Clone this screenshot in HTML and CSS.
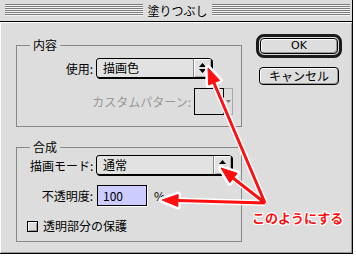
FILE: index.html
```html
<!DOCTYPE html>
<html lang="ja">
<head>
    <meta charset="UTF-8">
    <title>塗りつぶし</title>
    <link rel="stylesheet" href="styles.css">
</head>
<body>

<div class="window">
    <div class="titlebar">
        <span class="stripes"></span>
        <span class="title">塗りつぶし</span>
        <span class="stripes"></span>
    </div>

    <div class="dialog">
        <div class="main">
            <fieldset class="group first">
                <legend>内容</legend>
                <div class="row">
                    <span class="lbl">使用:</span>
                    <div class="popup short">
                        <span class="val">描画色</span>
                        <span class="arr"><svg width="7" height="10" viewBox="0 0 7 10"><path d="M3.5 0 L7 4 L0 4 Z M0 6 L7 6 L3.5 10 Z"/></svg></span>
                    </div>
                </div>
                <div class="row pattern">
                    <span class="lbl dim">カスタムパターン:</span>
                    <div class="swatch">
                        <span class="well"></span>
                        <span class="drop"><svg width="5" height="3" viewBox="0 0 5 3"><path d="M0 0 L5 0 L2.5 3 Z"/></svg></span>
                    </div>
                </div>
            </fieldset>

            <fieldset class="group second">
                <legend>合成</legend>
                <div class="row">
                    <span class="lbl">描画モード:</span>
                    <div class="popup long">
                        <span class="val">通常</span>
                        <span class="arr"><svg width="7" height="10" viewBox="0 0 7 10"><path d="M3.5 0 L7 4 L0 4 Z M0 6 L7 6 L3.5 10 Z"/></svg></span>
                    </div>
                </div>
                <div class="row gap">
                    <span class="lbl">不透明度:</span>
                    <span class="num">100</span>
                    <span class="pct">%</span>
                </div>
                <div class="row check-row">
                    <span class="check"></span>
                    <span>透明部分の保護</span>
                </div>
            </fieldset>
        </div>

        <div class="buttons">
            <div class="default-ring"><div class="btn ok">OK</div></div>
            <div class="btn cancel">キャンセル</div>
        </div>
    </div>

    <!-- 注釈の矢印 -->
    <svg class="marks" width="356" height="257" viewBox="0 0 356 257">
        <g class="halo">
            <path d="M265 203 L214 83 M265 203 L233 178 M265 203 L178 200.5"/>
            <polygon points="208,68 219.7,80.4 208.7,85"/>
            <polygon points="221,168 237.2,173.3 229.8,182.7"/>
            <polygon points="162,200 178.2,194.5 177.8,206.5"/>
        </g>
        <g class="ink">
            <path d="M265 203 L214 83 M265 203 L233 178 M265 203 L178 200.5"/>
            <polygon points="208,68 219.7,80.4 208.7,85"/>
            <polygon points="221,168 237.2,173.3 229.8,182.7"/>
            <polygon points="162,200 178.2,194.5 177.8,206.5"/>
        </g>
    </svg>
    <div class="note">このようにする</div>
</div>

</body>
</html>
```

FILE: styles.css
```css
body {
    margin: 0;
    background-color: #ffffff;
    font-family: "Noto Sans CJK JP", "DejaVu Sans", sans-serif;
    font-size: 12px;
    color: #000;
}

.window {
    position: relative;
    width: 352px;
    height: 253px;
    background-color: #dddddd;
    border-right: 1px solid #000;
    border-bottom: 1px solid #000;
}

.titlebar {
    display: flex;
    gap: 2px;
    height: 21px;
    padding: 0 2px 0 5px;
    border-bottom: 1px solid #000;
}

.stripes {
    flex: 1;
    height: 12px;
    margin-top: 4px;
    background: repeating-linear-gradient(to bottom, #7c7c7c 0 1px, #f4f4f4 1px 2px);
}

.title {
    padding: 0 2px;
    line-height: 21px;
}

.dialog {
    display: flex;
    height: 231px;
    box-sizing: border-box;
    padding: 12px 0 0 16px;
    box-shadow: inset 1px 1px 0 #fff, inset -1px -1px 0 #999;
}

.main {
    width: 226px;
}

.group {
    margin: 0;
    padding: 6px 8px 11px 13px;
    border: 1px solid #888;
}

.group legend {
    padding: 0 3px;
    line-height: 14px;
}

.group.first {
    margin-top: 4px;
}

.group.second {
    margin-top: 13px;
    padding-top: 1px;
    padding-bottom: 8px;
}

.row {
    display: flex;
    align-items: center;
}

.lbl {
    width: 63px;
    margin-right: 3px;
    text-align: right;
    white-space: nowrap;
}

.dim {
    color: #999;
}

.row.pattern {
    justify-content: flex-end;
    margin-top: 10px;
}

.row.pattern .lbl {
    width: auto;
}

.row.gap {
    margin-top: 10px;
}

.popup {
    display: flex;
    height: 20px;
    box-sizing: border-box;
    border: 1px solid #000;
    border-radius: 3px;
    box-shadow: 1px 1px 0 #000;
    background-color: #e2e2e2;
}

.popup.short {
    width: 116px;
}

.popup.long {
    width: 136px;
}

.popup .val {
    flex: 1;
    padding-left: 6px;
    line-height: 18px;
}

.popup .arr {
    display: flex;
    align-items: center;
    justify-content: center;
    width: 17px;
    border-left: 1px solid #888;
    border-radius: 0 2px 2px 0;
    box-shadow: inset 1px 1px 0 #fff, inset -1px -1px 0 #aaa;
}

.swatch {
    display: flex;
}

.swatch .well {
    width: 28px;
    height: 25px;
    border: 1px solid #000;
    background-color: #dddddd;
}

.swatch .drop {
    display: flex;
    justify-content: center;
    padding-top: 11px;
    width: 9px;
    border: 1px solid #aaa;
    border-left: none;
    box-sizing: border-box;
    height: 27px;
    fill: #777;
}

.num {
    width: 50px;
    height: 21px;
    box-sizing: border-box;
    margin-left: 1px;
    padding-left: 5px;
    border: 1px solid #000;
    background-color: #ccccff;
    box-shadow: 1px 1px 0 #fff;
    line-height: 19px;
}

.pct {
    margin-left: 7px;
    font-size: 12px;
}

.check-row {
    margin-top: 13px;
    line-height: 14px;
}

.check {
    width: 11px;
    height: 11px;
    box-sizing: border-box;
    margin-left: -3px;
    margin-right: 5px;
    border: 1px solid #000;
    background-color: #dddddd;
    box-shadow: inset 1px 1px 0 #fff, inset -1px -1px 0 #999;
}

.buttons {
    display: flex;
    flex-direction: column;
    align-items: center;
    gap: 9px;
    width: 86px;
    margin-left: 14px;
}

.default-ring {
    width: 86px;
    height: 24px;
    box-sizing: border-box;
    padding: 1px;
    border: 3px solid #1a1a1a;
    border-radius: 8px;
}

.btn {
    box-sizing: border-box;
    border: 1px solid #000;
    border-radius: 4px;
    background-color: #dddddd;
    box-shadow: inset 1px 1px 0 #fff, inset -1px -1px 0 #999;
    text-align: center;
}

.btn.ok {
    height: 16px;
    line-height: 14px;
    font-family: "DejaVu Sans", sans-serif;
    font-size: 11px;
}

.btn.cancel {
    width: 80px;
    height: 18px;
    line-height: 16px;
}

.marks {
    position: absolute;
    left: 0;
    top: 0;
    pointer-events: none;
}

.marks .halo {
    stroke: #fff;
    stroke-width: 6;
    fill: #fff;
    stroke-linejoin: round;
}

.marks .ink {
    stroke: #ff1010;
    stroke-width: 3;
    fill: #ff1010;
}

.marks .ink polygon {
    stroke-width: 1;
}

.note {
    position: absolute;
    left: 252px;
    top: 210px;
    color: #ff1010;
    font-size: 13px;
    font-weight: bold;
    line-height: 16px;
    text-shadow: 1px 0 0 #fff, -1px 0 0 #fff, 0 1px 0 #fff, 0 -1px 0 #fff, 1px 1px 0 #fff, -1px -1px 0 #fff, 1px -1px 0 #fff, -1px 1px 0 #fff;
}
```
